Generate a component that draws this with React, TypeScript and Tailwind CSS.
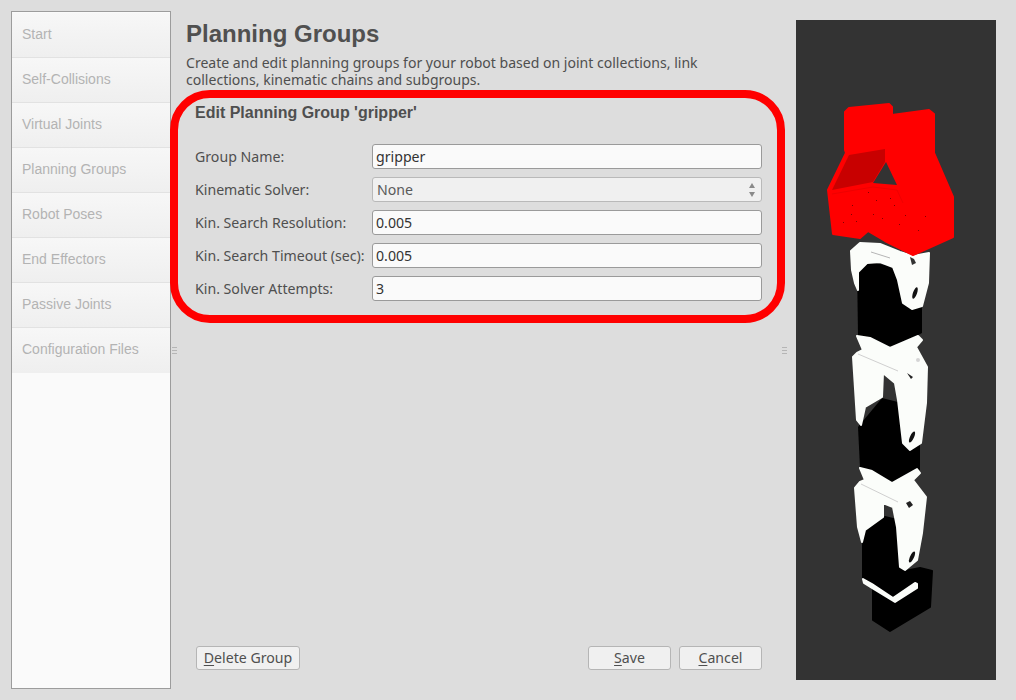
const steps = ["Start", "Self-Collisions", "Virtual Joints", "Planning Groups", "Robot Poses", "End Effectors", "Passive Joints", "Configuration Files"]

function Grip() {
  return (
    <div className="flex w-[5px] shrink-0 flex-col gap-[2px]">
      <div className="h-px bg-[#b5b5b5]" />
      <div className="h-px bg-[#b5b5b5]" />
      <div className="h-px bg-[#b5b5b5]" />
    </div>
  )
}

function Row({ label, value }: { label: string; value: string }) {
  return (
    <div className="flex h-[25px] items-center">
      <div className="w-[177px] shrink-0 text-[#4f4f4f]">{label}</div>
      <div className="flex h-[25px] flex-1 items-center rounded-[3px] border border-[#9a9a9a] bg-[#fafafa] px-[3px] text-[#333333]">{value}</div>
    </div>
  )
}

const specks = [
  [852, 205], [868, 192], [873, 214], [882, 218], [851, 214], [856, 221], [894, 205], [890, 198], [905, 215], [925, 216], [843, 222], [876, 200], [899, 224], [918, 230],
]

function Robot() {
  return (
    <svg viewBox="796 20 200 660" className="h-[660px] w-[200px]" strokeLinejoin="round">
      {/* black motor blocks */}
      <polygon fill="#000" points="857,265 867,262 893,266 922,280 922,333 890,350 858,336" />
      <polygon fill="#000" points="882,398 898,402 920,412 920,470 893,485 860,468 858,427" />
      <polygon fill="#000" stroke="#000" strokeWidth="2" points="885,517 897,520 899,560 905,571 920,568 932,571 930,607 890,631 873,620 873,588 863,578 863,545 865,530" />

      {/* links */}
      <g fill="#fbfdfa" stroke="#fbfdfa" strokeWidth="2">
        <polygon points="851,251 860,243 880,244 900,252 913,256 929,253 928,283 922,306 912,309 903,303 898,280 893,267 880,262 867,263 858,272 858,290 855,283 852,270" />
        <polygon points="857,336 870,338 890,348 918,336 922,340 916,347 927,367 926,403 921,443 910,450 903,443 898,400 895,383 883,373 882,397 865,407 861,425 857,420 853,357 857,353 863,350" />
        <polygon points="860,468 872,471 892,483 917,469 920,473 913,480 926,497 922,533 917,560 905,570 900,567 897,527 893,507 883,503 883,517 865,530 862,542 858,527 855,488 860,482 865,480" />
        <polygon points="863,579 872,584 893,598 915,583 917,584 917,588 895,602 872,588 864,583" />
      </g>

      <ellipse cx="915" cy="293" rx="2" ry="6" fill="#111" transform="rotate(20 915 293)" />
      <polygon fill="#333" points="910,257 914,259 916,263 912,265" />
      <line x1="871" y1="252" x2="890" y2="258" stroke="#b5b5b5" />

      <ellipse cx="912" cy="437" rx="2" ry="6" fill="#111" transform="rotate(25 912 437)" />
      <line x1="858" y1="354" x2="898" y2="371" stroke="#d0d0d0" />
      <polygon fill="#222" points="907,373 913,377 911,379" />
      <circle cx="918" cy="360" r="2" fill="#d5d5d5" />

      <ellipse cx="912" cy="557" rx="2" ry="6" fill="#111" transform="rotate(25 912 557)" />
      <line x1="861" y1="484" x2="898" y2="502" stroke="#d0d0d0" />
      <polygon fill="#222" points="906,503 910,501 913,505 909,508" />

      {/* gripper */}
      <polygon fill="#ff0000" stroke="#ff0000" strokeWidth="2" points="845,112 849,108 889,104 892,107 892,115 929,110 934,114 934,153 953,197 953,237 913,255 885,241 868,231 860,238 833,234 828,190 846,153 845,150" />
      <polygon fill="#c80000" points="849,155 885,149 885,162 873,182 832,190" />
      <polygon fill="#333333" points="886,162 897,185 873,183" />
      <polyline fill="none" stroke="#ef0000" strokeWidth="1" points="832,194 873,187 897,190 903,203" />
      {specks.map(([x, y]) => (
        <rect key={`${x}-${y}`} x={x} y={y} width="1" height="1" fill="#800000" />
      ))}
    </svg>
  )
}

export default function App() {
  return (
    <div className="relative flex h-[700px] w-[1016px] overflow-hidden bg-[#dddddd] pl-[11px] font-['Noto_Sans',sans-serif] text-[14.15px] leading-[17px]">
      {/* wizard steps */}
      <div className="my-[11px] flex w-[160px] shrink-0 flex-col border border-[#9c9c9c] bg-[#fafafa] pt-px font-['Liberation_Sans',sans-serif] text-[14px] text-[#b3b3b3]">
        {steps.map((step) => (
          <div key={step} className="flex h-[45px] shrink-0 items-center border-b border-[#e2e2e2] bg-gradient-to-b from-[#f7f7f7] to-[#efefef] pb-px pl-[10px] last:border-b-[#efefef]">
            {step}
          </div>
        ))}
      </div>

      <div className="flex w-[15px] shrink-0 items-center pl-[1px]">
        <Grip />
      </div>

      {/* main column */}
      <div className="flex w-[576px] shrink-0 flex-col pt-[20px]">
        <h1 className="font-['Liberation_Sans',sans-serif] text-[24px] leading-[28px] font-bold text-[#505050]">Planning Groups</h1>
        <p className="mt-[6px] w-[560px] text-[14.05px] text-[#4f4f4f]">
          Create and edit planning groups for your robot based on joint collections, link collections, kinematic chains and subgroups.
        </p>
        <h2 className="mt-[16px] pl-[9px] font-['Liberation_Sans',sans-serif] text-[16px] leading-[18px] font-bold text-[#4f4f4f]">Edit Planning Group 'gripper'</h2>

        <div className="mt-[22px] flex flex-col gap-[8px] pl-[9px]">
          <Row label="Group Name:" value="gripper" />
          <div className="flex h-[25px] items-center">
            <div className="w-[177px] shrink-0 text-[#4f4f4f]">Kinematic Solver:</div>
            <div className="flex h-[25px] flex-1 items-center justify-between rounded-[3px] border border-[#b9b9b9] bg-[#f0f0f0] pr-[5px] pl-[4px] text-[#5a5a5a]">
              <span>None</span>
              <svg viewBox="0 0 8 16" className="h-[16px] w-[8px]">
                <polygon points="4,1 7,6 1,6" fill="#8a8a8a" />
                <polygon points="4,15 7,10 1,10" fill="#8a8a8a" />
              </svg>
            </div>
          </div>
          <Row label="Kin. Search Resolution:" value="0.005" />
          <Row label="Kin. Search Timeout (sec):" value="0.005" />
          <Row label="Kin. Solver Attempts:" value="3" />
        </div>

        <div className="mt-auto mb-[30px] flex items-center justify-between pl-[10px]">
          <button className="h-[24px] w-[104px] rounded-[3px] border border-[#b5b5b5] bg-[#f0f0f0] pb-[2px] text-[#4f4f4f]">
            <u className="underline-offset-2">D</u>elete Group
          </button>
          <div className="flex gap-[8px]">
            <button className="h-[24px] w-[83px] rounded-[3px] border border-[#b5b5b5] bg-[#f0f0f0] pb-[2px] text-[#4f4f4f]">
              <u className="underline-offset-2">S</u>ave
            </button>
            <button className="h-[24px] w-[83px] rounded-[3px] border border-[#b5b5b5] bg-[#f0f0f0] pb-[2px] text-[#4f4f4f]">
              <u className="underline-offset-2">C</u>ancel
            </button>
          </div>
        </div>
      </div>

      <div className="flex w-[34px] shrink-0 items-center pl-[20px]">
        <Grip />
      </div>

      {/* robot view */}
      <div className="my-[20px] h-[660px] w-[200px] shrink-0 bg-[#333333]">
        <Robot />
      </div>

      {/* red highlight drawn over the form */}
      <div className="pointer-events-none absolute top-[90px] left-[170px] h-[233px] w-[615px] rounded-[40px] border-[8px] border-[#ff0000]" />
    </div>
  )
}
